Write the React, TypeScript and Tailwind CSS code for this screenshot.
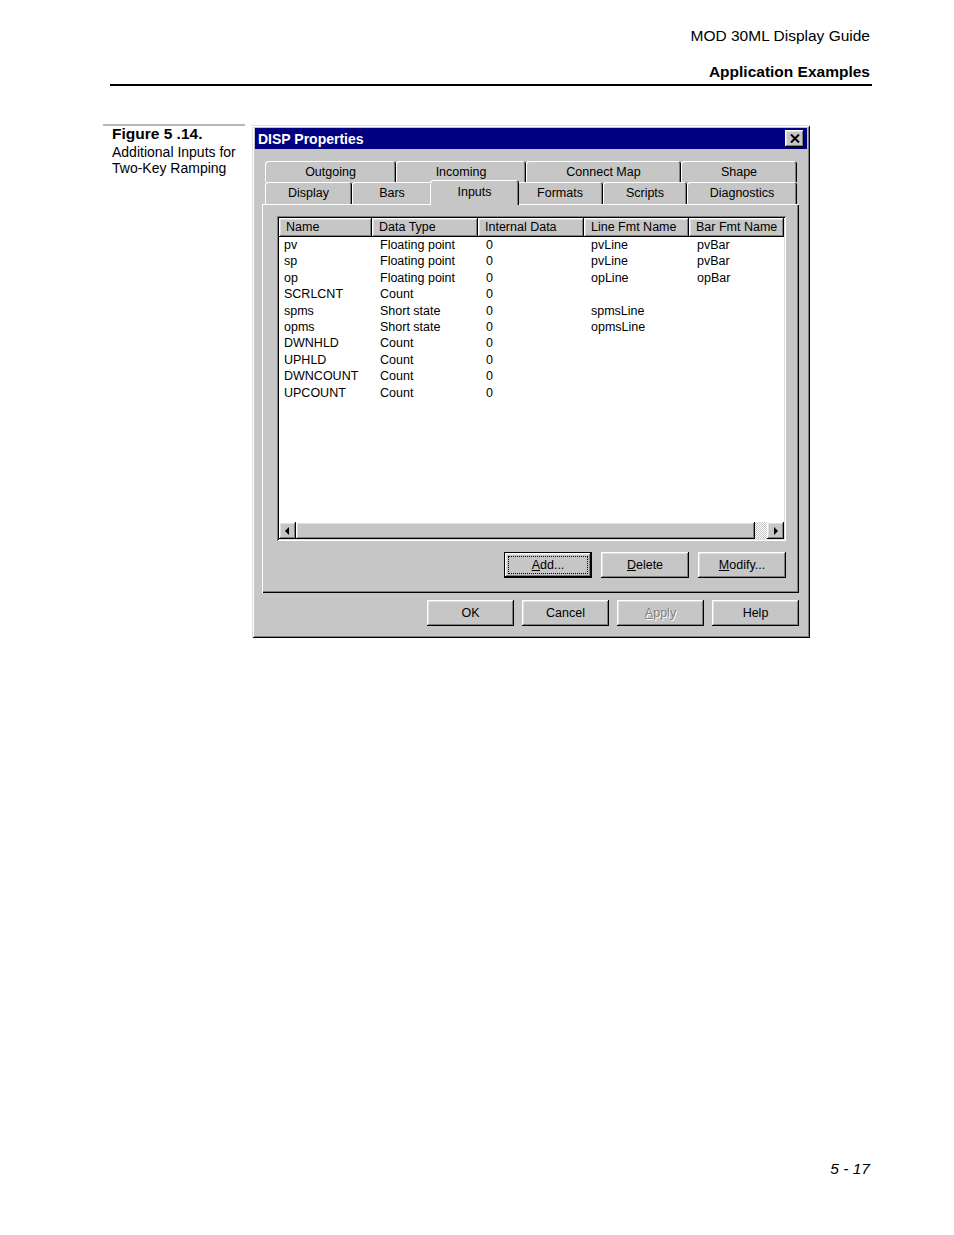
import React from "react";

const RAISED =
  "shadow-[inset_-1px_-1px_#000,inset_1px_1px_#fff,inset_-2px_-2px_#808080,inset_2px_2px_#dfdfdf]";
const SUNKEN =
  "shadow-[inset_1px_1px_#808080,inset_-1px_-1px_#fff,inset_2px_2px_#000,inset_-2px_-2px_#dfdfdf]";

const columns = [
  { label: "Name", w: "w-[93px]", pad: "pl-[5px]" },
  { label: "Data Type", w: "w-[106px]", pad: "pl-[8px]" },
  { label: "Internal Data", w: "w-[106px]", pad: "pl-[8px]" },
  { label: "Line Fmt Name", w: "w-[105px]", pad: "pl-[7px]" },
  { label: "Bar Fmt Name", w: "w-[95px]", pad: "pl-[8px]" },
];

const rows = [
  ["pv", "Floating point", "0", "pvLine", "pvBar"],
  ["sp", "Floating point", "0", "pvLine", "pvBar"],
  ["op", "Floating point", "0", "opLine", "opBar"],
  ["SCRLCNT", "Count", "0", "", ""],
  ["spms", "Short state", "0", "spmsLine", ""],
  ["opms", "Short state", "0", "opmsLine", ""],
  ["DWNHLD", "Count", "0", "", ""],
  ["UPHLD", "Count", "0", "", ""],
  ["DWNCOUNT", "Count", "0", "", ""],
  ["UPCOUNT", "Count", "0", "", ""],
];

const backTabs = [
  { label: "Outgoing", w: "w-[131px]" },
  { label: "Incoming", w: "w-[130px]" },
  { label: "Connect Map", w: "w-[155px]" },
  { label: "Shape", w: "w-[116px]" },
];

const frontTabs = [
  { label: "Display", w: "w-[87px]" },
  { label: "Bars", w: "w-[80px]" },
  { label: "Inputs", w: "w-[89px]", active: true },
  { label: "Formats", w: "w-[86px]" },
  { label: "Scripts", w: "w-[84px]" },
  { label: "Diagnostics", w: "w-[110px]" },
];

function Tab({ label, w, active }: { label: string; w: string; active?: boolean }) {
  if (active) {
    return (
      <div
        className={`${w} relative z-10 -mx-[2px] -mt-[2px] h-[25px] bg-[#c6c6c6] rounded-t-[3px] shadow-[inset_1px_1px_#fff,inset_-1px_0_#000,inset_-2px_0_#808080] flex items-start justify-center pt-[3px]`}
      >
        {label}
      </div>
    );
  }
  return (
    <div
      className={`${w} h-full rounded-t-[3px] shadow-[inset_1px_1px_#fff,inset_-1px_0_#000,inset_-2px_0_#808080] flex items-center justify-center pt-[1px]`}
    >
      {label}
    </div>
  );
}

function Btn({
  children,
  w = "w-[87px]",
  def,
}: {
  children: React.ReactNode;
  w?: string;
  def?: boolean;
}) {
  if (def) {
    return (
      <div className={`${w} h-[26px] border border-black`}>
        <div className={`h-full ${RAISED} p-[3px]`}>
          <div className="h-full border border-dotted border-black flex items-center justify-center">
            {children}
          </div>
        </div>
      </div>
    );
  }
  return (
    <div className={`${w} h-[26px] ${RAISED} flex items-center justify-center`}>
      {children}
    </div>
  );
}

function Arrow({ dir }: { dir: "left" | "right" }) {
  return (
    <div className={`w-[17px] h-[17px] ${RAISED} flex items-center justify-center`}>
      <svg width="6" height="8" viewBox="0 0 6 8">
        {dir === "left" ? (
          <polygon points="4,0 4,8 0,4" fill="#000" />
        ) : (
          <polygon points="1,0 1,8 5,4" fill="#000" />
        )}
      </svg>
    </div>
  );
}

function Dialog() {
  return (
    <div className="w-[558px] h-[513px] bg-[#c6c6c6] p-[3px] shadow-[inset_1px_1px_#dfdfdf,inset_-1px_-1px_#000,inset_2px_2px_#fff,inset_-2px_-2px_#808080] text-[12.5px] text-black">
      {/* TITLE BAR */}
      <div className="h-[21px] bg-[#000080] flex items-center justify-between pl-[3px] pr-[3px]">
        <span className="text-white font-bold text-[14px] leading-none">DISP Properties</span>
        <div className={`w-[19px] h-[17px] bg-[#c6c6c6] ${RAISED} flex items-center justify-center`}>
          <svg width="10" height="9" viewBox="0 0 10 9">
            <path d="M1 0.5 L9 8.5 M9 0.5 L1 8.5" stroke="#000" strokeWidth="2" />
          </svg>
        </div>
      </div>

      {/* TABS */}
      <div className="pl-[7px] pt-[12px]">
        <div className="w-[537px]">
          <div className="h-[21px] flex pl-[3px]">
            {backTabs.map((t) => (
              <Tab key={t.label} {...t} />
            ))}
          </div>
          <div className="h-[22px] flex items-start pl-[3px]">
            {frontTabs.map((t) => (
              <Tab key={t.label} {...t} />
            ))}
          </div>

          {/* PANEL */}
          <div className="h-[389px] shadow-[inset_1px_1px_#fff,inset_-1px_-1px_#000,inset_-2px_-2px_#808080] pl-[15px] pt-[12px] pr-[13px]">
            {/* LIST */}
            <div className={`w-[509px] h-[325px] ${SUNKEN} p-[2px] flex flex-col`}>
              <div className="h-[19px] flex">
                {columns.map((c) => (
                  <div
                    key={c.label}
                    className={`${c.w} h-full ${RAISED} pl-[7px] flex items-center leading-none`}
                  >
                    {c.label}
                  </div>
                ))}
                <div className="flex-1 bg-white" />
              </div>
              <div className="flex-1 bg-white">
                {rows.map((r) => (
                  <div key={r[0]} className="flex h-[16.4px] leading-[16.4px]">
                    {r.map((cell, i) => (
                      <div key={i} className={`${columns[i].w} ${columns[i].pad}`}>
                        {cell}
                      </div>
                    ))}
                  </div>
                ))}
              </div>
              <div className="h-[17px] flex bg-[#c6c6c6]">
                <Arrow dir="left" />
                <div className={`w-[459px] h-full ${RAISED}`} />
                <div className="flex-1 h-full bg-[repeating-conic-gradient(#c6c6c6_0_25%,#fff_0_50%)] bg-[length:2px_2px]" />
                <Arrow dir="right" />
              </div>
            </div>

            {/* PANEL BUTTONS */}
            <div className="mt-[11px] flex justify-end gap-[9px]">
              <Btn def w="w-[88px]">
                <span>
                  <span className="underline">A</span>dd...
                </span>
              </Btn>
              <Btn w="w-[88px]">
                <span>
                  <span className="underline">D</span>elete
                </span>
              </Btn>
              <Btn w="w-[88px]">
                <span>
                  <span className="underline">M</span>odify...
                </span>
              </Btn>
            </div>
          </div>
        </div>
      </div>

      {/* DIALOG BUTTONS */}
      <div className="mt-[7px] flex justify-end gap-[8px] pr-[8px]">
        <Btn>OK</Btn>
        <Btn>Cancel</Btn>
        <Btn>
          <span className="text-[#808080] [text-shadow:1px_1px_0_#fff]">
            <span className="underline">A</span>pply
          </span>
        </Btn>
        <Btn>Help</Btn>
      </div>
    </div>
  );
}

export default function App() {
  return (
    <main className="w-[954px] h-[1235px] bg-white flex flex-col font-['Liberation_Sans',Arial,sans-serif] text-black">
      {/* HEADER */}
      <div className="pt-[27px] pr-[84px] text-right text-[15.5px] leading-[18px]">
        <p>MOD 30ML Display Guide</p>
        <p className="mt-[18px] font-bold">Application Examples</p>
      </div>
      <div className="ml-[110px] mt-[3px] w-[762px] border-t-2 border-black" />

      {/* FIGURE */}
      <div className="mt-[38px] flex">
        <div className="ml-[103px] w-[142px] border-t-2 border-[#b8b8b8] pl-[9px] leading-[16px]">
          <p className="font-bold text-[15.5px] mb-[2px]">Figure 5 .14.</p>
          <p className="text-[14px]">Additional Inputs for</p>
          <p className="text-[14px]">Two-Key Ramping</p>
        </div>
        <div className="ml-[7px] mt-[1px]">
          <Dialog />
        </div>
      </div>

      {/* FOOTER */}
      <div className="mt-auto pb-[57px] pr-[84px] text-right italic text-[15.5px] leading-[18px]">
        5 - 17
      </div>
    </main>
  );
}
